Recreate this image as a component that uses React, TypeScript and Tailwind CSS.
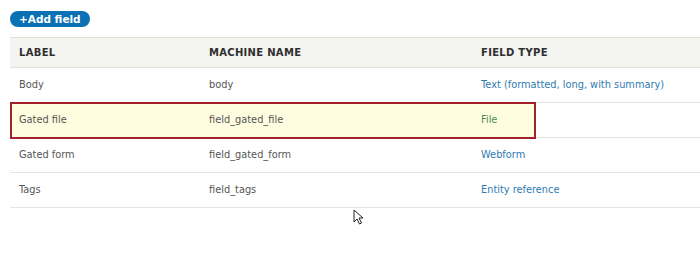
import React from 'react';

interface FieldRow {
  label: string;
  machine: string;
  type: string;
  highlight?: boolean;
}

const rows: FieldRow[] = [
  { label: 'Body', machine: 'body', type: 'Text (formatted, long, with summary)' },
  { label: 'Gated file', machine: 'field_gated_file', type: 'File', highlight: true },
  { label: 'Gated form', machine: 'field_gated_form', type: 'Webform' },
  { label: 'Tags', machine: 'field_tags', type: 'Entity reference' },
];

const cols = 'grid grid-cols-[190px_272px_1fr]';

const App: React.FC = () => {
  return (
    <div className="relative h-[255px] w-[700px] overflow-hidden bg-white pl-[10px] pt-[11px] font-['DejaVu_Sans',sans-serif]">
      <button className="flex h-[16px] items-center rounded-full bg-[#0a71b5] px-[9px] text-[10.5px] font-bold leading-none text-white">
        +Add field
      </button>

      {/* Fields table */}
      <div className="mt-[10px] text-[9.8px]">
        <div className={`${cols} h-[31px] items-center border-y border-[#e2e0da] bg-[#f4f4f1] text-[10px] font-bold tracking-[0.3px] text-[#2f2f2f]`}>
          <div className="px-[9px]">LABEL</div>
          <div className="px-[9px]">MACHINE NAME</div>
          <div className="px-[9px]">FIELD TYPE</div>
        </div>
        {rows.map((row) => (
          <div
            key={row.machine}
            className={`${cols} relative h-[35px] items-center border-b border-[#e6e4df] text-[#555]`}
          >
            {row.highlight && (
              <div className="absolute -top-px bottom-[-2px] left-0 w-[526px] border-2 border-[#a3212b] bg-[#fffde0]" />
            )}
            <div className="relative px-[9px]">{row.label}</div>
            <div className="relative px-[9px]">{row.machine}</div>
            <div className={`relative px-[9px] ${row.highlight ? 'text-[#4c8a5e]' : 'text-[#2f7ab0]'}`}>
              {row.type}
            </div>
          </div>
        ))}
      </div>

      {/* Mouse pointer */}
      <svg className="absolute left-[353px] top-[209px]" width="12" height="17" viewBox="0 0 12 17">
        <path d="M1 1 L1 13 L4 10 L6.5 15 L8.5 14 L6 9 L10 9 Z" fill="#fff" stroke="#222" strokeWidth="1" strokeLinejoin="round" />
      </svg>
    </div>
  );
};

export default App;
